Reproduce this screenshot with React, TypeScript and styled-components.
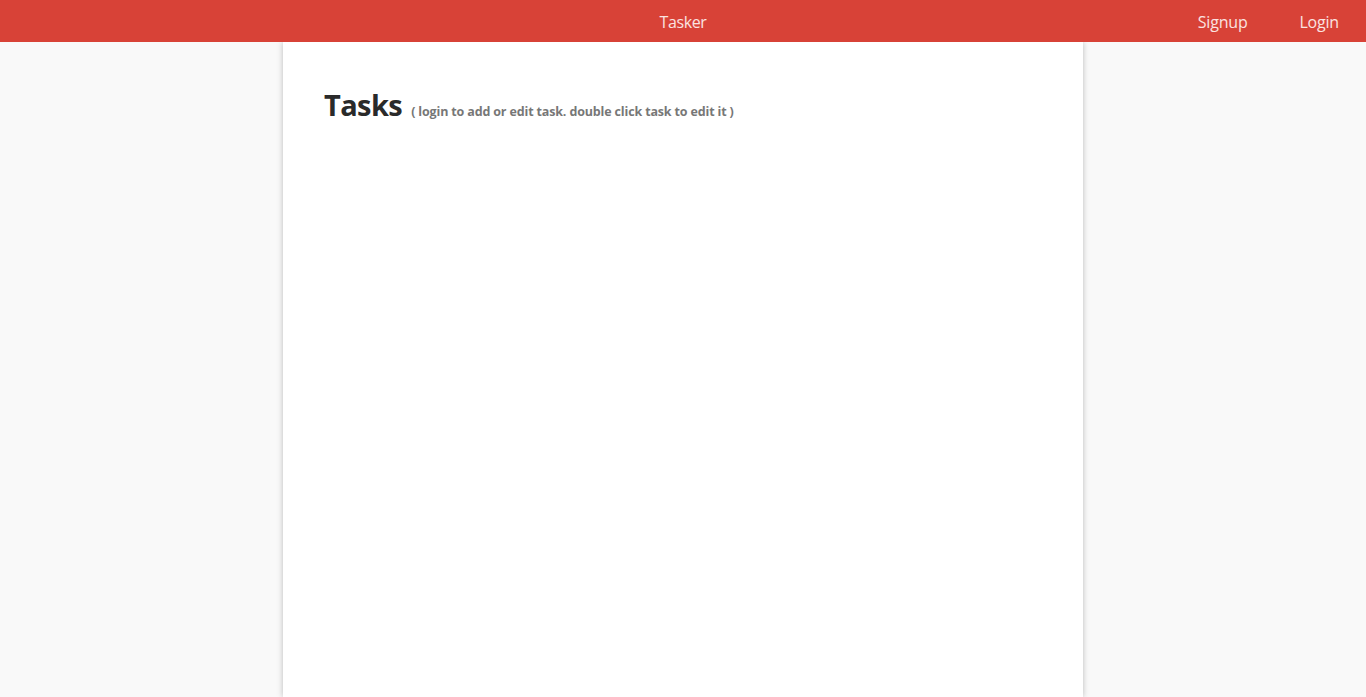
import React from "react";
import styled, { createGlobalStyle } from "styled-components";

const Global = createGlobalStyle`
  html, body { margin: 0; padding: 0; }
  body {
    background: #f9f9f9;
    font-family: "Open Sans", "Noto Sans", sans-serif;
    overflow: hidden;
  }
`;

const Page = styled.div`
  display: flex;
  flex-direction: column;
  min-height: 697px;
`;

const Header = styled.header`
  height: 42px;
  background: #d84237;
  display: grid;
  grid-template-columns: 1fr auto 1fr;
  align-items: center;
  color: #fbe3e0;
  font-size: 16px;
  padding-top: 2px;
  box-sizing: border-box;
  position: relative;
  z-index: 2;
`;

const Brand = styled.div`
  grid-column: 2;
  letter-spacing: -0.4px;
`;

const Nav = styled.nav`
  grid-column: 3;
  justify-self: end;
  display: flex;
  gap: 52px;
  padding-right: 27px;
`;

const NavLink = styled.a`
  color: #fbe3e0;
  text-decoration: none;
  letter-spacing: -0.2px;
`;

const Card = styled.main`
  width: 800px;
  margin: 0 auto;
  flex: 1;
  background: #fff;
  box-shadow: 0 0 6px rgba(0, 0, 0, 0.25);
  padding: 43px 41px;
  box-sizing: border-box;
`;

const TitleRow = styled.div`
  display: flex;
  align-items: baseline;
  gap: 9px;
`;

const Title = styled.h1`
  margin: 0;
  font-size: 29px;
  font-weight: 700;
  color: #2a2a2a;
  letter-spacing: -0.6px;
`;

const Hint = styled.span`
  font-size: 12.5px;
  font-weight: 700;
  color: #777;
  letter-spacing: -0.15px;
`;

export default function App() {
  return (
    <>
      <Global />
      <Page>
        <Header>
          <Brand>Tasker</Brand>
          <Nav>
            <NavLink href="#">Signup</NavLink>
            <NavLink href="#">Login</NavLink>
          </Nav>
        </Header>
        <Card>
          <TitleRow>
            <Title>Tasks</Title>
            <Hint>( login to add or edit task. double click task to edit it )</Hint>
          </TitleRow>
        </Card>
      </Page>
    </>
  );
}
